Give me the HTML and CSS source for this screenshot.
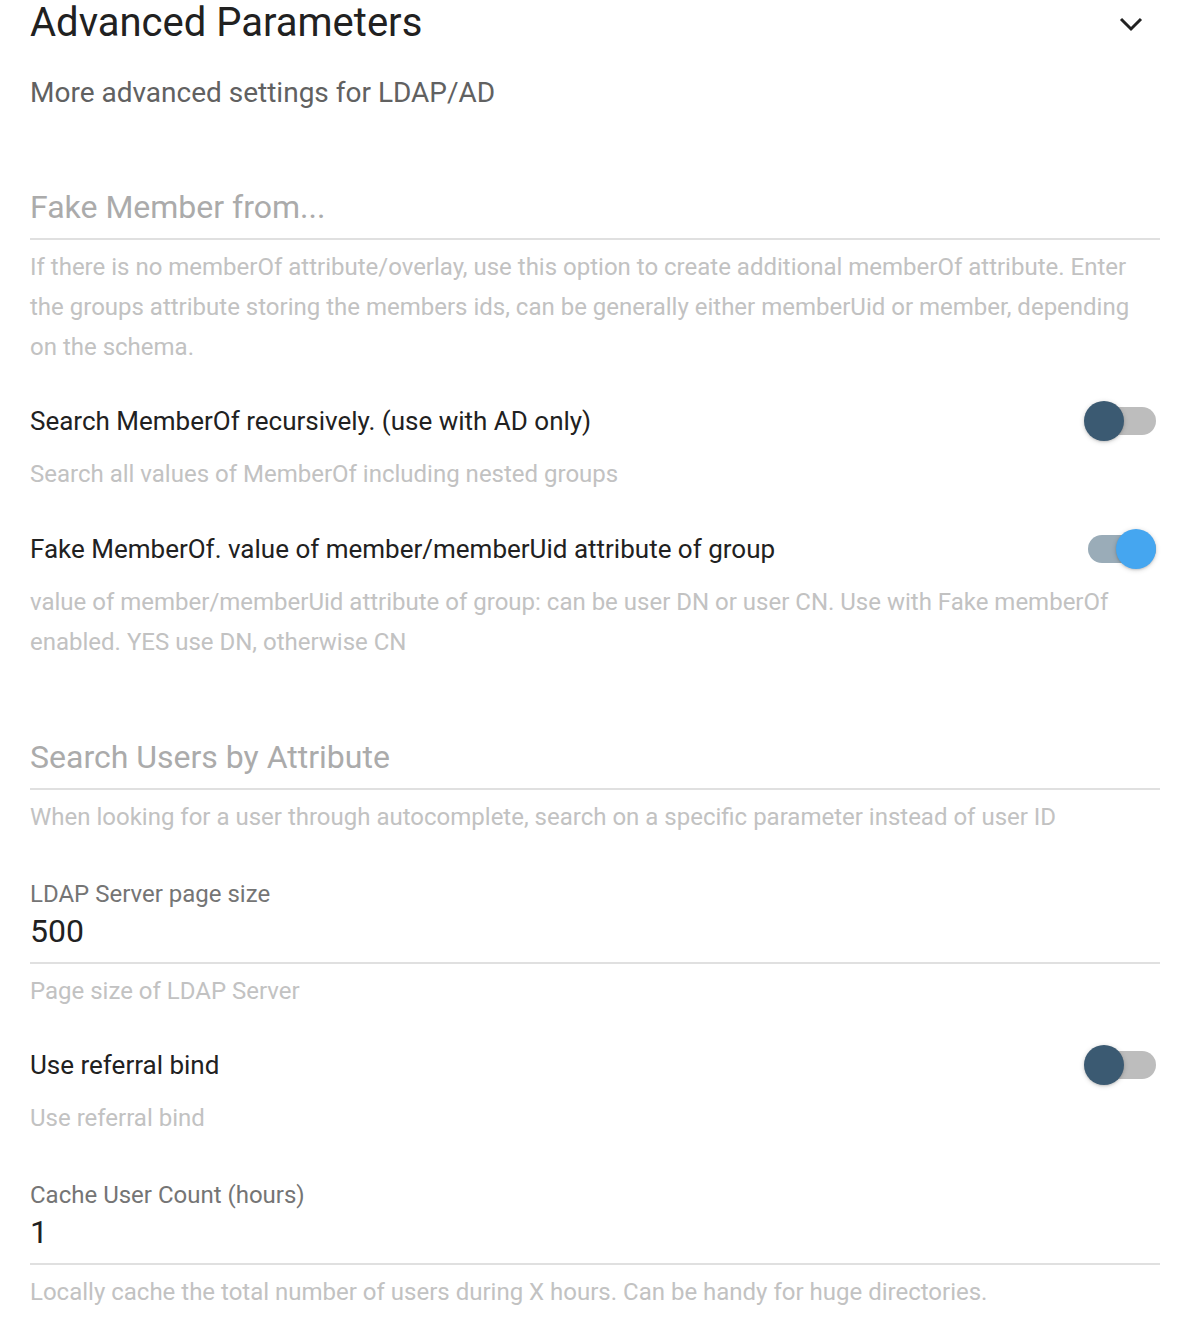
FILE: index.html
```html
<!DOCTYPE html>
<html lang="en">
<head>
<meta charset="utf-8">
<title>Advanced Parameters</title>
<link rel="stylesheet" href="styles.css">
</head>
<body>
<div class="panel">
  <div class="header">
    <h1 class="title">Advanced Parameters</h1>
    <svg class="chevron" width="24" height="16" viewBox="0 0 24 16"><path d="M2 3 L12 13 L22 3" fill="none" stroke="#222" stroke-width="3"/></svg>
  </div>
  <div class="subtitle">More advanced settings for LDAP/AD</div>

  <div class="field gap-lg">
    <div class="input placeholder">Fake Member from...</div>
  </div>
  <div class="help gap-xs">If there is no memberOf attribute/overlay, use this option to create additional memberOf attribute. Enter the groups attribute storing the members ids, can be generally either memberUid or member, depending on the schema.</div>

  <div class="switch-row gap-md">
    <span class="switch-label">Search MemberOf recursively. (use with AD only)</span>
    <span class="switch off"><span class="track"></span><span class="thumb"></span></span>
  </div>
  <div class="help gap-sm">Search all values of MemberOf including nested groups</div>

  <div class="switch-row gap-md switch-row-2">
    <span class="switch-label">Fake MemberOf. value of member/memberUid attribute of group</span>
    <span class="switch on"><span class="track"></span><span class="thumb"></span></span>
  </div>
  <div class="help gap-sm">value of member/memberUid attribute of group: can be user DN or user CN. Use with Fake memberOf enabled. YES use DN, otherwise CN</div>

  <div class="field gap-xl">
    <div class="input placeholder">Search Users by Attribute</div>
  </div>
  <div class="help gap-xs">When looking for a user through autocomplete, search on a specific parameter instead of user ID</div>

  <div class="field gap-label">
    <div class="field-label">LDAP Server page size</div>
    <div class="input value">500</div>
  </div>
  <div class="help gap-xs">Page size of LDAP Server</div>

  <div class="switch-row gap-md">
    <span class="switch-label">Use referral bind</span>
    <span class="switch off"><span class="track"></span><span class="thumb"></span></span>
  </div>
  <div class="help gap-sm">Use referral bind</div>

  <div class="field gap-label">
    <div class="field-label">Cache User Count (hours)</div>
    <div class="input value">1</div>
  </div>
  <div class="help gap-xs">Locally cache the total number of users during X hours. Can be handy for huge directories.</div>
</div>
</body>
</html>
```

FILE: styles.css
```css
* { box-sizing: border-box; }
html, body { margin: 0; padding: 0; background: #fff; }
body { font-family: Roboto, "Noto Sans", sans-serif; color: #212121; }

.panel { width: 1190px; padding: 0 30px; }

.header { display: flex; align-items: center; justify-content: space-between; height: 46px; }
.title { margin: 0; font-size: 40px; font-weight: 400; line-height: 48px; color: #212121; }
.chevron { margin-right: 17px; margin-top: 2px; }

.subtitle { margin-top: 26px; font-size: 28px; line-height: 42px; color: #616161; }

.gap-xl { margin-top: 76px; }
.gap-lg { margin-top: 73px; }
.gap-label { margin-top: 41px; }
.gap-md { margin-top: 35px; }
.gap-sm { margin-top: 13px; }
.gap-xs { margin-top: 7px; }
.switch-row-2 { margin-top: 36px; }

.field { border-bottom: 2px solid #e0e0e0; padding-bottom: 11px; }
.input { line-height: 40px; height: 40px; }
.placeholder { font-size: 32px; color: #ababab; }
.value { font-size: 32px; color: #212121; }
.field-label { font-size: 24px; line-height: 34px; color: #757575; }

.help { font-size: 24px; line-height: 40px; color: #c2c2c2; margin-bottom: -1px; }

.switch-row { display: flex; align-items: center; justify-content: space-between; height: 40px; }
.switch-label { font-size: 26px; line-height: 40px; color: #212121; }

.switch { position: relative; width: 72px; height: 40px; margin-right: 4px; flex: none; }
.switch .track { position: absolute; left: 4px; top: 6px; width: 68px; height: 28px; border-radius: 14px; }
.switch .thumb { position: absolute; top: 0; width: 40px; height: 40px; border-radius: 50%; box-shadow: 0 1px 5px rgba(0,0,0,0.18), 0 1px 2px rgba(0,0,0,0.12); }
.switch.off .track { background: #bdbdbd; }
.switch.off .thumb { left: 0; background: #3b5a72; }
.switch.on .track { background: #9aacb8; }
.switch.on .thumb { left: 32px; background: #45a6f0; }
```
